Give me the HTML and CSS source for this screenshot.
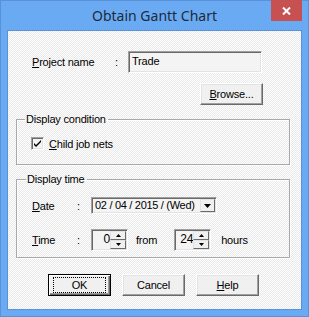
FILE: index.html
```html
<!DOCTYPE html>
<html lang="en">
<head>
    <meta charset="UTF-8">
    <meta name="viewport" content="width=device-width, initial-scale=1.0">
    <title>Obtain Gantt Chart</title>
    <link rel="stylesheet" href="styles.css">
</head>
<body>
    <div class="window">
        <div class="title-bar">
            <span></span>
            <div class="title">Obtain Gantt Chart</div>
            <div class="close">
                <svg width="9" height="8" viewBox="0 0 9 8">
                    <path d="M1 0.5 L8 7.5 M8 0.5 L1 7.5" stroke="#fff" stroke-width="2" fill="none"/>
                </svg>
            </div>
        </div>

        <div class="client">
            <div class="project-row">
                <label class="project-label"><u>P</u>roject name</label>
                <span class="colon">:</span>
                <div class="textbox">Trade</div>
            </div>
            <div class="browse-row">
                <button type="button" class="btn"><u>B</u>rowse...</button>
            </div>

            <fieldset class="group group-cond">
                <legend>Display condition</legend>
                <div class="check-row">
                    <span class="checkbox">
                        <svg width="9" height="9" viewBox="0 0 9 9">
                            <path d="M1 4 L3 6 L8 1 L8 3 L3 8 L1 6 Z" fill="#000"/>
                        </svg>
                    </span>
                    <span><u>C</u>hild job nets</span>
                </div>
            </fieldset>

            <fieldset class="group group-time">
                <legend>Display time</legend>
                <div class="field-row date-row">
                    <span class="field-label"><u>D</u>ate</span>
                    <span class="field-colon">:</span>
                    <div class="combo">
                        <span class="combo-text">02 / 04 / 2015 / (Wed)</span>
                        <span class="combo-btn">
                            <svg width="7" height="4" viewBox="0 0 7 4"><path d="M0 0 H7 L3.5 4 Z" fill="#000"/></svg>
                        </span>
                    </div>
                </div>
                <div class="field-row time-row">
                    <span class="field-label"><u>T</u>ime</span>
                    <span class="field-colon">:</span>
                    <div class="spin">
                        <span class="spin-text">0</span>
                        <span class="spin-btns">
                            <span class="spin-btn"><svg width="5" height="3" viewBox="0 0 5 3"><path d="M0 3 H5 L2.5 0 Z" fill="#000"/></svg></span>
                            <span class="spin-btn"><svg width="5" height="3" viewBox="0 0 5 3"><path d="M0 0 H5 L2.5 3 Z" fill="#000"/></svg></span>
                        </span>
                    </div>
                    <span class="from">from</span>
                    <div class="spin">
                        <span class="spin-text">24</span>
                        <span class="spin-btns">
                            <span class="spin-btn"><svg width="5" height="3" viewBox="0 0 5 3"><path d="M0 3 H5 L2.5 0 Z" fill="#000"/></svg></span>
                            <span class="spin-btn"><svg width="5" height="3" viewBox="0 0 5 3"><path d="M0 0 H5 L2.5 3 Z" fill="#000"/></svg></span>
                        </span>
                    </div>
                    <span class="hours">hours</span>
                </div>
            </fieldset>

            <div class="buttons">
                <button type="button" class="btn btn-default"><span class="focus">OK</span></button>
                <button type="button" class="btn">Cancel</button>
                <button type="button" class="btn"><u>H</u>elp</button>
            </div>
        </div>
    </div>
</body>
</html>
```

FILE: styles.css
```css
body {
    margin: 0;
    padding: 0;
    font-family: "Liberation Sans", Arial, sans-serif;
    font-size: 11px;
    letter-spacing: -0.2px;
    color: #000;
}

.window {
    width: 309px;
    height: 317px;
    box-sizing: border-box;
    background-color: #6aaaf3;
    border: 1px solid #5b91d8;
    padding: 0 6px 6px 6px;
    display: flex;
    flex-direction: column;
}

.title-bar {
    height: 30px;
    margin-top: -1px;
    display: grid;
    grid-template-columns: 1fr auto 1fr;
}

.title {
    font-family: "Noto Sans", sans-serif;
    font-size: 14px;
    letter-spacing: 0;
    color: #1d2a38;
    align-self: center;
    padding-top: 1px;
}

.close {
    justify-self: end;
    width: 31px;
    height: 21px;
    background-color: #c75050;
    display: flex;
    justify-content: center;
    align-items: center;
}

.client {
    flex: 1;
    border: 1px solid #5b91d8;
    background: repeating-conic-gradient(#ffffff 0 25%, #e9e9e9 0 50%) 0 0 / 2px 2px;
    display: flex;
    flex-direction: column;
}

/* project name */
.project-row {
    display: flex;
    align-items: center;
    margin-top: 20px;
    padding-left: 24px;
}

.project-label {
    width: 83px;
}

.colon {
    width: 13px;
}

.textbox {
    width: 134px;
    height: 22px;
    box-sizing: border-box;
    background-color: #f4f4f4;
    border-top: 1px solid #a0a0a0;
    border-left: 1px solid #a0a0a0;
    border-right: 1px solid #fff;
    border-bottom: 1px solid #fff;
    box-shadow: inset 1px 1px #696969, inset -1px -1px #e3e3e3;
    padding: 3px 3px;
}

.browse-row {
    display: flex;
    justify-content: flex-end;
    padding-right: 38px;
    margin-top: 10px;
}

/* buttons */
.btn {
    width: 63px;
    height: 22px;
    box-sizing: border-box;
    font-family: inherit;
    font-size: 11px;
    letter-spacing: -0.2px;
    color: #000;
    background-color: #f0f0f0;
    border-top: 1px solid #fff;
    border-left: 1px solid #fff;
    border-right: 1px solid #696969;
    border-bottom: 1px solid #696969;
    box-shadow: inset -1px -1px #a0a0a0, inset 1px 1px #e3e3e3;
    padding: 0;
    display: flex;
    justify-content: center;
    align-items: center;
}

.btn-default {
    border: 1px solid #000;
    box-shadow: inset 1px 1px #fff, inset -1px -1px #696969, inset -2px -2px #a0a0a0;
}

.btn-default .focus {
    width: 51px;
    height: 14px;
    border: 1px dotted #000;
    display: flex;
    justify-content: center;
    align-items: center;
}

/* group boxes */
.group {
    margin: 0 11px 0 8px;
    border: 1px solid #a9a9a9;
    box-shadow: inset 1px 1px #fff, 1px 1px #fff;
    padding: 0 0 0 14px;
    min-width: 0;
}

.group legend {
    line-height: 13px;
    padding: 0 2px 0 1px;
    margin-left: -6px;
}

.group-cond {
    margin-top: 8px;
    padding-top: 11px;
    padding-bottom: 14px;
}

.check-row {
    display: flex;
    align-items: center;
    gap: 5px;
}

.checkbox {
    width: 13px;
    height: 13px;
    box-sizing: border-box;
    background-color: #f4f4f4;
    border-top: 1px solid #a0a0a0;
    border-left: 1px solid #a0a0a0;
    border-right: 1px solid #fff;
    border-bottom: 1px solid #fff;
    box-shadow: inset 1px 1px #696969, inset -1px -1px #e3e3e3;
    display: flex;
    justify-content: center;
    align-items: center;
}

.group-time {
    margin-top: 8px;
    padding-top: 11px;
    padding-bottom: 6px;
    padding-left: 15px;
}

.field-row {
    display: flex;
    align-items: center;
}

.time-row {
    margin-top: 15px;
}

.field-label {
    width: 45px;
}

.field-colon {
    width: 14px;
}

.combo {
    width: 126px;
    height: 17px;
    box-sizing: border-box;
    background-color: #f4f4f4;
    border-top: 1px solid #a0a0a0;
    border-left: 1px solid #a0a0a0;
    border-right: 1px solid #fff;
    border-bottom: 1px solid #fff;
    box-shadow: inset 1px 1px #696969, inset -1px -1px #e3e3e3;
    display: flex;
    align-items: center;
    padding: 1px 1px 1px 3px;
}

.combo-text {
    flex: 1;
    white-space: nowrap;
    overflow: hidden;
    font-size: 11px;
    letter-spacing: -0.3px;
    line-height: 13px;
}

.combo-btn {
    width: 15px;
    height: 13px;
    flex: none;
    box-sizing: border-box;
    background-color: #f0f0f0;
    border-top: 1px solid #e3e3e3;
    border-left: 1px solid #e3e3e3;
    border-right: 1px solid #696969;
    border-bottom: 1px solid #696969;
    display: flex;
    justify-content: center;
    align-items: center;
}

.spin {
    width: 37px;
    height: 22px;
    box-sizing: border-box;
    background-color: #f4f4f4;
    border-top: 1px solid #a0a0a0;
    border-left: 1px solid #a0a0a0;
    border-right: 1px solid #fff;
    border-bottom: 1px solid #fff;
    box-shadow: inset 1px 1px #696969, inset -1px -1px #e3e3e3;
    display: flex;
    padding: 1px;
}

.spin-text {
    flex: 1;
    text-align: right;
    font-size: 12px;
    line-height: 13px;
    padding-top: 2px;
}

.spin-btns {
    width: 16px;
    display: flex;
    flex-direction: column;
}

.spin-btn {
    flex: 1;
    background-color: #f0f0f0;
    border-top: 1px solid #e3e3e3;
    border-left: 1px solid #e3e3e3;
    border-right: 1px solid #696969;
    border-bottom: 1px solid #696969;
    display: flex;
    justify-content: center;
    align-items: center;
}

.from {
    margin: 0 17px 0 8px;
}

.hours {
    margin-left: 10px;
}

.buttons {
    display: flex;
    gap: 11px;
    padding-left: 40px;
    margin-top: 16px;
}
```
